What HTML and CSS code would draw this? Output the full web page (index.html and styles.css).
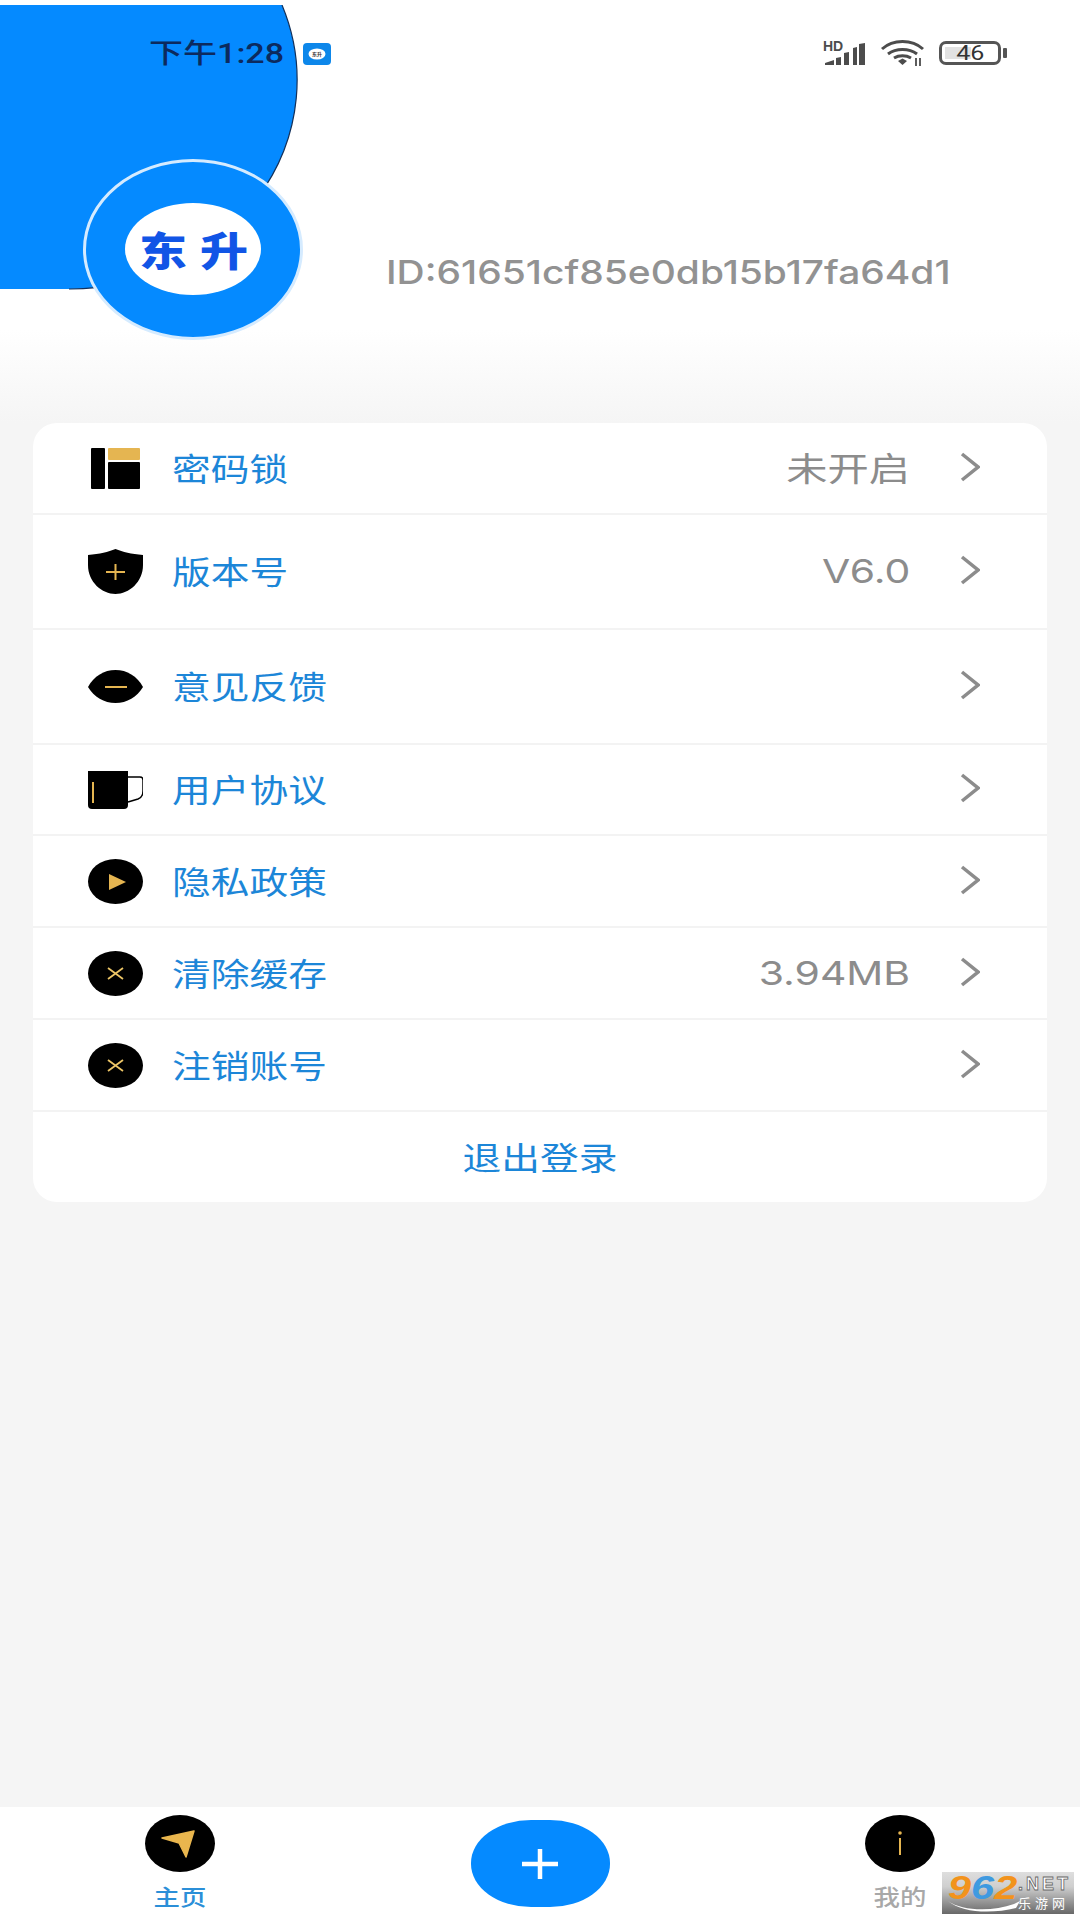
FILE: index.html
```html
<!DOCTYPE html>
<html lang="zh">
<head>
<meta charset="utf-8">
<title>我的</title>
<link rel="stylesheet" href="styles.css">
</head>
<body>
<div class="page">
  <header class="header">
    <svg class="blob" viewBox="0 0 300 285" width="300" height="285"><path d="M0 0H282A227 209 0 0 1 69 284H0Z" fill="#058aff"/><path d="M282 0A227 209 0 0 1 69 284" fill="none" stroke="#12305a" stroke-width="1.200"/></svg>
    <div class="status">
      <div class="status-left">
        <span class="time">下午1:28</span>
        <svg class="badge" viewBox="0 0 28 22" width="28" height="22"><rect width="28" height="22" rx="4" fill="#0d87ea"/><ellipse cx="14" cy="11" rx="8.500" ry="5.500" fill="#fff"/><text x="14" y="13" text-anchor="middle" class="badge-text">东升</text></svg>
      </div>
      <div class="status-right">
        <svg class="signal" viewBox="0 0 43 25" width="43" height="25"><text x="0" y="10" class="hd">HD</text><path d="M2 24v-2l9-3v5zM13 24v-7l5-1v8zM21 24V12l5-1v13zM30 24V7l4-1v18zM36 24V3l6-1v22z" fill="#4c4c4c"/></svg>
        <svg class="wifi" viewBox="0 0 43 26" width="43" height="26"><path d="M1 9C12-1 31-1 42 9M7 14c8-6 21-6 29 0M13 18c5-3 12-3 17 0" fill="none" stroke="#4c4c4c" stroke-width="3"/><path d="M17 21l4.500-2.500 4.500 2.500-4.500 4z" fill="#4c4c4c"/><path d="M35 18v8M39 18v8" stroke="#4c4c4c" stroke-width="1.800"/></svg>
        <div class="battery"><div class="battery-body"><span class="battery-fill"></span><span class="battery-num">46</span></div><span class="battery-nub"></span></div>
      </div>
    </div>
    <div class="profile">
      <div class="avatar"><div class="avatar-inner"><span class="avatar-text">东</span><span class="avatar-text">升</span></div></div>
      <span class="user-id">ID:61651cf85e0db15b17fa64d1</span>
    </div>
  </header>

  <main class="card">
    <div class="row row-first">
      <span class="row-icon"><svg viewBox="0 0 55 41" width="55" height="41"><rect x="3" width="14" height="41" rx="1" fill="#000"/><rect x="20" width="32" height="12" rx="1" fill="#e5b551"/><rect x="20" y="14" width="32" height="27" rx="1" fill="#000"/></svg></span>
      <span class="row-label"><span class="wide">密码锁</span></span>
      <span class="row-value"><span class="wide-r">未开启</span></span>
      <svg class="chev" viewBox="0 0 20 30" width="20" height="30"><path d="M2 2l16 13L2 28" fill="none" stroke="#8c8c8c" stroke-width="3.500"/></svg>
    </div>
    <div class="row row-tall">
      <span class="row-icon"><svg viewBox="0 0 55 45" width="55" height="45"><path d="M0 6C12 5 20 3 27.500 0 35 3 43 5 55 6V16C55 33 41 45 27.500 45 14 45 0 33 0 16Z" fill="#000"/><path d="M18 23H37M27.500 15V31" stroke="#e5b551" stroke-width="2"/></svg></span>
      <span class="row-label"><span class="wide">版本号</span></span>
      <span class="row-value"><span class="wide-r num">V6.0</span></span>
      <svg class="chev" viewBox="0 0 20 30" width="20" height="30"><path d="M2 2l16 13L2 28" fill="none" stroke="#8c8c8c" stroke-width="3.500"/></svg>
    </div>
    <div class="row row-tall">
      <span class="row-icon"><svg viewBox="0 0 55 33" width="55" height="33"><path d="M0 17C6 6 16 0 27.500 0 39 0 49 6 55 17 49 27 39 33 27.500 33 16 33 6 27 0 17Z" fill="#000"/><path d="M17 17H39" stroke="#e5b551" stroke-width="2"/></svg></span>
      <span class="row-label"><span class="wide">意见反馈</span></span>
      <svg class="chev" viewBox="0 0 20 30" width="20" height="30"><path d="M2 2l16 13L2 28" fill="none" stroke="#8c8c8c" stroke-width="3.500"/></svg>
    </div>
    <div class="row row-mug">
      <span class="row-icon"><svg viewBox="0 0 55 38" width="55" height="38"><path d="M0 0H40V34Q40 38 36 38H4Q0 38 0 34Z" fill="#000"/><path d="M40 6H52Q55 6 55 9V20Q55 26 50 28L40 31" fill="none" stroke="#000" stroke-width="1.500"/><path d="M5 11V32" stroke="#e5b551" stroke-width="2"/></svg></span>
      <span class="row-label"><span class="wide">用户协议</span></span>
      <svg class="chev" viewBox="0 0 20 30" width="20" height="30"><path d="M2 2l16 13L2 28" fill="none" stroke="#8c8c8c" stroke-width="3.500"/></svg>
    </div>
    <div class="row">
      <span class="row-icon"><svg viewBox="0 0 55 45" width="55" height="45"><ellipse cx="27.500" cy="22.500" rx="27.500" ry="22.500" fill="#000"/><path d="M21 15L38 23 21 31Z" fill="#e5b551"/></svg></span>
      <span class="row-label"><span class="wide">隐私政策</span></span>
      <svg class="chev" viewBox="0 0 20 30" width="20" height="30"><path d="M2 2l16 13L2 28" fill="none" stroke="#8c8c8c" stroke-width="3.500"/></svg>
    </div>
    <div class="row">
      <span class="row-icon"><svg viewBox="0 0 55 45" width="55" height="45"><ellipse cx="27.500" cy="22.500" rx="27.500" ry="22.500" fill="#000"/><path d="M20 17L35 28M35 17L20 28" stroke="#ecc566" stroke-width="1.800"/></svg></span>
      <span class="row-label"><span class="wide">清除缓存</span></span>
      <span class="row-value"><span class="wide-r num">3.94MB</span></span>
      <svg class="chev" viewBox="0 0 20 30" width="20" height="30"><path d="M2 2l16 13L2 28" fill="none" stroke="#8c8c8c" stroke-width="3.500"/></svg>
    </div>
    <div class="row">
      <span class="row-icon"><svg viewBox="0 0 55 45" width="55" height="45"><ellipse cx="27.500" cy="22.500" rx="27.500" ry="22.500" fill="#000"/><path d="M20 17L35 28M35 17L20 28" stroke="#ecc566" stroke-width="1.800"/></svg></span>
      <span class="row-label"><span class="wide">注销账号</span></span>
      <svg class="chev" viewBox="0 0 20 30" width="20" height="30"><path d="M2 2l16 13L2 28" fill="none" stroke="#8c8c8c" stroke-width="3.500"/></svg>
    </div>
    <div class="logout"><span class="wide-c">退出登录</span></div>
  </main>

  <div class="spacer"></div>

  <nav class="tabbar">
    <div class="tab">
      <svg viewBox="0 0 70 57" width="70" height="57"><ellipse cx="35" cy="28.500" rx="35" ry="28.500" fill="#000"/><path d="M49 16L17 23 34 28 41 42Z" fill="#e9b64e" stroke="#e9b64e" stroke-width="1.500" stroke-linejoin="round"/></svg>
      <span class="tab-label active">主页</span>
    </div>
    <div class="tab tab-center">
      <div class="add"><svg viewBox="0 0 36 30" width="36" height="30"><path d="M0 15H36M18 0V30" stroke="#fff" stroke-width="4.500"/></svg></div>
    </div>
    <div class="tab">
      <svg viewBox="0 0 70 57" width="70" height="57"><ellipse cx="35" cy="28.500" rx="35" ry="28.500" fill="#000"/><circle cx="35" cy="18" r="1.800" fill="#e5b551"/><path d="M35 23V40" stroke="#e5b551" stroke-width="2"/></svg>
      <span class="tab-label">我的</span>
    </div>
  </nav>

  <div class="watermark">
    <span class="wm-num"><span class="wm-o">9</span><span class="wm-b">6</span><span class="wm-o">2</span></span>
    <div class="wm-side"><span class="wm-net">.NET</span><span class="wm-cn">乐游网</span></div>
    <svg class="wm-arc" viewBox="0 0 72 14" width="72" height="14"><path d="M0 2C14 12 44 13 66 5L72 2 68 9C44 15 14 14 0 2Z" fill="#fff"/></svg>
  </div>
</div>
</body>
</html>
```

FILE: styles.css
```css
* { box-sizing: border-box; }
html, body { margin: 0; padding: 0; }
body {
  width: 1080px;
  height: 1920px;
  overflow: hidden;
  font-family: "Noto Sans CJK SC", "Noto Sans", sans-serif;
}
.page {
  position: relative;
  width: 1080px;
  height: 1920px;
  display: flex;
  flex-direction: column;
  background: #f5f5f5;
}

/* header */
.header {
  position: relative;
  height: 423px;
  flex: none;
  background: linear-gradient(#fff 330px, #f5f5f5 100%);
}
.blob {
  position: absolute;
  left: 0;
  top: 5px;
  display: block;
}
.status {
  position: relative;
  height: 106px;
  padding: 38px 73px 0 149px;
  display: flex;
  justify-content: space-between;
  align-items: flex-start;
}
.status-left { display: flex; align-items: center; }
.time {
  display: inline-block;
  width: 154px;
  font: 500 27px/32px Roboto, "Noto Sans CJK SC", sans-serif;
  color: #0c2a5e;
  transform: scaleX(1.26);
  transform-origin: left center;
  white-space: nowrap;
}
.badge { display: block; }
.badge-text { font-size: 5px; font-weight: 700; fill: #333; }
.status-right { display: flex; align-items: center; gap: 15px; padding-top: 2px; }
.signal, .wifi { display: block; overflow: visible; }
.hd { font: 700 14px "Liberation Sans", sans-serif; fill: #4c4c4c; }
.battery { display: flex; align-items: center; gap: 2px; }
.battery-body {
  position: relative;
  width: 62px;
  height: 24px;
  border: 3px solid #555;
  border-radius: 7px;
  display: flex;
  align-items: center;
  justify-content: center;
}
.battery-fill {
  position: absolute;
  left: 3px;
  top: 3px;
  bottom: 3px;
  width: 46%;
  background: #e2e2e2;
}
.battery-num {
  position: relative;
  font: 400 20px/18px Roboto, sans-serif;
  color: #333;
  transform: scaleX(1.25);
}
.battery-nub {
  width: 4px;
  height: 10px;
  border-radius: 1px;
  background: #555;
}

.profile {
  position: relative;
  display: flex;
  align-items: flex-start;
  margin-top: 53px;
  padding-left: 83px;
}
.avatar {
  width: 220px;
  height: 181px;
  flex: none;
  border-radius: 50%;
  background: #058aff;
  border: 3px solid #d5ebff;
  display: flex;
  align-items: center;
  justify-content: center;
}
.avatar-inner {
  width: 136px;
  height: 92px;
  border-radius: 50%;
  background: #fff;
  display: flex;
  align-items: center;
  justify-content: center;
  gap: 21px;
  margin-top: -1px;
}
.avatar-text {
  display: inline-block;
  font-size: 40px;
  line-height: 40px;
  font-weight: 900;
  color: #1155e6;
  transform: scaleX(1.2);
}
.user-id {
  display: inline-block;
  margin: 93px 0 0 83px;
  font: 500 33px/40px Inter, Roboto, sans-serif;
  color: #929292;
  white-space: nowrap;
  transform: scaleX(1.18);
  transform-origin: left center;
}

/* list card */
.card {
  margin: 0 33px;
  flex: none;
  background: #fff;
  border-radius: 24px;
  display: flex;
  flex-direction: column;
}
.row {
  height: 92px;
  flex: none;
  display: flex;
  align-items: center;
  padding: 0 67px 0 55px;
  border-bottom: 2px solid #f3f3f3;
}
.row-first { height: 92px; }
.row-tall { height: 115px; }
.row-mug { height: 91px; }
.row-icon {
  width: 55px;
  flex: none;
  display: flex;
  align-items: center;
  justify-content: center;
}
.row-icon svg { display: block; }
.row-label {
  margin: 0 0 3px 29px;
  font-size: 32px;
  line-height: 44px;
  color: #1c86d8;
  flex: 1;
}
.row-value {
  margin: 0 50px 3px 0;
  font-size: 33px;
  line-height: 44px;
  color: #8c8c8c;
}
.wide, .wide-r, .wide-c { display: inline-block; white-space: nowrap; }
.wide { transform: scaleX(1.21); transform-origin: left center; }
.wide-r { transform: scaleX(1.25); transform-origin: right center; }
.wide-c { transform: scaleX(1.21); transform-origin: center center; }
.num { font-family: Inter, Roboto, sans-serif; font-size: 33px; transform: scaleX(1.24); }
.chev { flex: none; display: block; margin-bottom: 3px; }
.logout {
  height: 90px;
  padding-bottom: 3px;
  display: flex;
  align-items: center;
  justify-content: center;
  font-size: 32px;
  color: #1c86d8;
}

.spacer { flex: 1; }

/* bottom tabs */
.tabbar {
  height: 113px;
  flex: none;
  background: #fff;
  display: grid;
  grid-template-columns: repeat(3, 1fr);
}
.tab {
  display: flex;
  flex-direction: column;
  align-items: center;
  padding-top: 8px;
}
.tab svg { display: block; }
.tab-center { padding-top: 13px; }
.tab-label {
  margin-top: 9px;
  font-size: 22px;
  line-height: 28px;
  color: #a8a8a8;
  font-weight: 500;
  transform: scaleX(1.2);
}
.tab-label.active { color: #2b8fd8; }
.add {
  width: 139px;
  height: 87px;
  border-radius: 60px / 43px;
  background: #058aff;
  display: flex;
  align-items: center;
  justify-content: center;
}

/* watermark */
.watermark {
  position: absolute;
  right: 6px;
  top: 1872px;
  width: 132px;
  height: 42px;
  background: linear-gradient(#dedede, #cfcfcf 35%, #686868);
  display: flex;
  align-items: flex-start;
  padding-left: 6px;
}
.wm-num {
  width: 70px;
  flex: none;
  font: italic 700 34px/30px "Liberation Sans", sans-serif;
  white-space: nowrap;
  transform: scaleX(1.22);
  transform-origin: left center;
}
.wm-o { color: #f2931c; }
.wm-b { color: #3f9ae0; }
.wm-side {
  display: flex;
  flex-direction: column;
  align-items: flex-start;
  padding-top: 4px;
}
.wm-net {
  font: 700 18px/17px "Liberation Sans", sans-serif;
  letter-spacing: 3px;
  color: #fff;
  -webkit-text-stroke: 0.8px #666;
}
.wm-cn {
  margin-top: 2px;
  font-size: 13px;
  line-height: 16px;
  letter-spacing: 4px;
  color: #fff;
}
.wm-arc {
  position: absolute;
  left: 6px;
  bottom: 1px;
}
```
